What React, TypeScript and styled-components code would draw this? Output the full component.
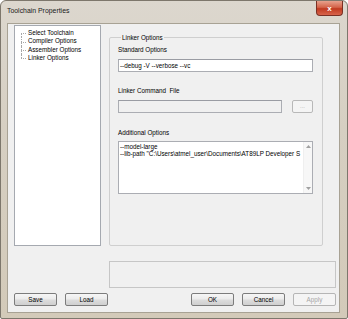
import React from 'react';
import styled, { createGlobalStyle } from 'styled-components';

const Global = createGlobalStyle`
  html, body {
    margin: 0;
    padding: 0;
    background: #ffffff;
  }
  body {
    font-family: "Liberation Sans", Arial, sans-serif;
  }
`;

const Frame = styled.div`
  box-sizing: border-box;
  width: 348px;
  height: 319px;
  display: flex;
  flex-direction: column;
  padding: 0 7px 6px 6px;
  background: linear-gradient(180deg, #dcd7ce 0%, #d6cfc2 40%, #d3cab9 100%);
  border: 1px solid #7d776c;
  border-radius: 6px 6px 2px 2px;
`;

const TitleBar = styled.div`
  height: 22px;
  display: flex;
  align-items: flex-start;
  flex-shrink: 0;
`;

const Title = styled.div`
  font-size: 6.9px;
  color: #1a1a1a;
  margin-top: 6px;
`;

const Close = styled.div`
  margin-left: auto;
  margin-right: -3px;
  width: 27px;
  height: 15px;
  box-sizing: border-box;
  border: 1px solid #7a3024;
  border-top: none;
  border-radius: 0 0 4px 4px;
  background: linear-gradient(180deg, #e7a18d 0%, #d4644a 45%, #c03a20 55%, #d8644b 100%);
  display: flex;
  align-items: center;
  justify-content: center;
  color: #fff;
  font-size: 8px;
  font-weight: bold;
`;

const Client = styled.div`
  flex: 1;
  display: flex;
  flex-direction: column;
  background: #f0f0f0;
  border: 1px solid #a8a294;
  padding: 1px 3px 6px 6px;
  font-size: 6.3px;
  color: #000;
`;

const Main = styled.div`
  display: flex;
  align-items: flex-start;
  gap: 8px;
  height: 222px;
  flex-shrink: 0;
`;

const Tree = styled.ul`
  box-sizing: border-box;
  width: 87px;
  height: 221px;
  margin: 0;
  padding: 3px 0 0 0;
  list-style: none;
  background: #fff;
  border: 1px solid #a5a9b0;
`;

const TreeItem = styled.li<{ $first?: boolean; $last?: boolean }>`
  position: relative;
  height: 8.35px;
  line-height: 8.35px;
  padding-left: 13px;
  white-space: nowrap;

  &::before {
    content: '';
    position: absolute;
    left: 6px;
    top: 50%;
    width: 5px;
    border-top: 1px dotted #a8a8a8;
  }
  &::after {
    content: '';
    position: absolute;
    left: 6px;
    top: ${p => (p.$first ? '50%' : '0')};
    bottom: ${p => (p.$last ? '50%' : '0')};
    border-left: 1px dotted #a8a8a8;
  }
`;

const Group = styled.fieldset`
  box-sizing: border-box;
  width: 214px;
  min-width: 0;
  height: 212px;
  margin: 9px 0 0 0;
  padding: 3px 9px 0 8px;
  border: 1px solid #cfcfcf;
  border-radius: 2px;
  display: flex;
  flex-direction: column;
`;

const Legend = styled.legend`
  font-size: 6.3px;
  padding: 0 1px;
  margin-left: 3px;
`;

const FieldLabel = styled.div<{ $top: number }>`
  margin-top: ${p => p.$top}px;
  height: 8px;
  line-height: 8px;
`;

const TextBox = styled.div<{ $disabled?: boolean }>`
  box-sizing: border-box;
  height: 13px;
  min-width: 0;
  border: 1px solid #abadb3;
  border-top-color: #9a9ca3;
  background: ${p => (p.$disabled ? '#f0f0f0' : '#ffffff')};
  padding: 0 1px;
  line-height: 11px;
  white-space: nowrap;
  overflow: hidden;
  flex: 1;
`;

const BrowseRow = styled.div`
  display: flex;
  align-items: flex-start;
  gap: 10px;
  margin-top: 5px;
`;

const SmallButton = styled.div`
  box-sizing: border-box;
  width: 21px;
  height: 13px;
  border: 1px solid #b8b8b8;
  border-radius: 2px;
  background: #f4f4f4;
  color: #a8a8a8;
  font-size: 6px;
  text-align: center;
  line-height: 10px;
`;

const StandardBox = styled(TextBox)`
  margin-top: 5px;
  flex: none;
`;

const Memo = styled.div`
  box-sizing: border-box;
  margin-top: 4px;
  height: 53px;
  border: 1px solid #abadb3;
  background: #fff;
  display: flex;
  min-width: 0;
`;

const MemoText = styled.div`
  flex: 1;
  min-width: 0;
  white-space: pre;
  padding: 2px 1px;
  line-height: 6.6px;
`;

const ScrollBar = styled.div`
  width: 8px;
  flex-shrink: 0;
  display: flex;
  flex-direction: column;
  justify-content: space-between;
  align-items: center;
  padding: 3px 0;
  background: #f7f7f7;
  border-left: 1px solid #efefef;
`;

const StatusBox = styled.div`
  box-sizing: border-box;
  margin: 14px 0 0 95px;
  height: 27px;
  border: 1px solid #c6c6c6;
  background: #f0f0f0;
  flex-shrink: 0;
`;

const ButtonRow = styled.div`
  display: flex;
  margin-top: 5px;
  gap: 8px;
`;

const Button = styled.div<{ $disabled?: boolean; $push?: boolean }>`
  box-sizing: border-box;
  width: 43px;
  height: 13px;
  margin-left: ${p => (p.$push ? 'auto' : '0')};
  border: 1px solid ${p => (p.$disabled ? '#b5b5b5' : '#7c7c7c')};
  border-radius: 2px;
  background: ${p =>
    p.$disabled
      ? '#f4f4f4'
      : 'linear-gradient(180deg, #f6f6f6 0%, #ebebeb 48%, #dddddd 52%, #cfcfcf 100%)'};
  color: ${p => (p.$disabled ? '#a6a6a6' : '#000')};
  text-align: center;
  line-height: 11px;
`;

const Arrow = ({ up }: { up?: boolean }) => (
  <svg width="5" height="3" viewBox="0 0 5 3">
    <path d={up ? 'M0 3 L2.5 0 L5 3 Z' : 'M0 0 L2.5 3 L5 0 Z'} fill="#a0a0a0" />
  </svg>
);

const treeItems = ['Select Toolchain', 'Compiler Options', 'Assembler Options', 'Linker Options'];

export default function App() {
  return (
    <>
      <Global />
      <Frame>
        <TitleBar>
          <Title>Toolchain Properties</Title>
          <Close>x</Close>
        </TitleBar>
        <Client>
          <Main>
            <Tree>
              {treeItems.map((t, i) => (
                <TreeItem key={t} $first={i === 0} $last={i === treeItems.length - 1}>
                  {t}
                </TreeItem>
              ))}
            </Tree>
            <Group>
              <Legend>Linker Options</Legend>
              <FieldLabel $top={2}>Standard Options</FieldLabel>
              <StandardBox>--debug -V --verbose --vc</StandardBox>
              <FieldLabel $top={15}>Linker Command&nbsp; File</FieldLabel>
              <BrowseRow>
                <TextBox $disabled />
                <SmallButton>...</SmallButton>
              </BrowseRow>
              <FieldLabel $top={16}>Additional Options</FieldLabel>
              <Memo>
                <MemoText>
                  {'--model-large\n--lib-path "C:\\Users\\atmel_user\\Documents\\AT89LP Developer S'}
                </MemoText>
                <ScrollBar>
                  <Arrow up />
                  <Arrow />
                </ScrollBar>
              </Memo>
            </Group>
          </Main>
          <StatusBox />
          <ButtonRow>
            <Button>Save</Button>
            <Button>Load</Button>
            <Button $push>OK</Button>
            <Button>Cancel</Button>
            <Button $disabled>Apply</Button>
          </ButtonRow>
        </Client>
      </Frame>
    </>
  );
}
